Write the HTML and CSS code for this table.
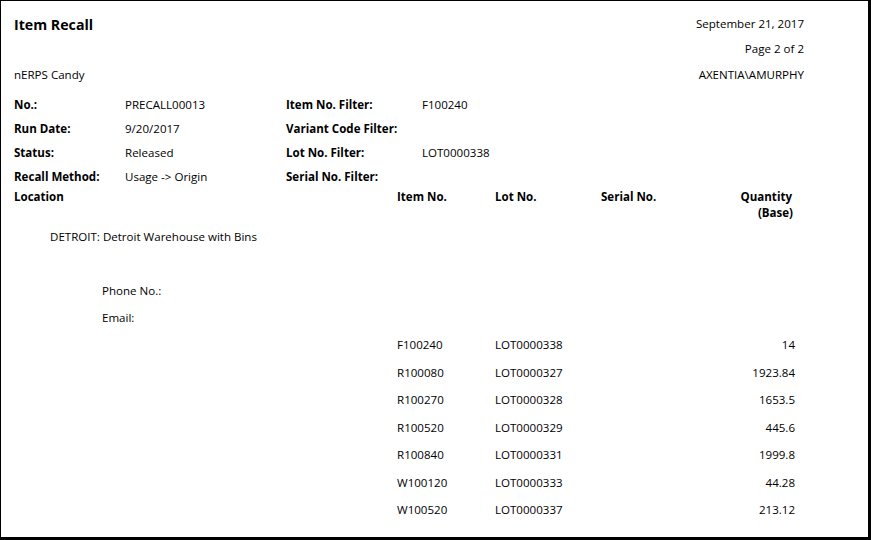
FILE: index.html
```html
<!DOCTYPE html>
<html>
<head>
<meta charset="utf-8">
<link rel="stylesheet" href="styles.css">
</head>
<body>
<div class="page">
  <div class="top">
    <div class="title">Item Recall</div>
    <div class="right">September 21, 2017</div>
    <div></div>
    <div class="right">Page 2 of 2</div>
    <div>nERPS Candy</div>
    <div class="right">AXENTIA\AMURPHY</div>
  </div>

  <div class="info">
    <div class="lbl">No.:</div><div>PRECALL00013</div><div class="lbl">Item No. Filter:</div><div>F100240</div>
    <div class="lbl">Run Date:</div><div>9/20/2017</div><div class="lbl">Variant Code Filter:</div><div></div>
    <div class="lbl">Status:</div><div>Released</div><div class="lbl">Lot No. Filter:</div><div>LOT0000338</div>
    <div class="lbl">Recall Method:</div><div>Usage -&gt; Origin</div><div class="lbl">Serial No. Filter:</div><div></div>
  </div>

  <div class="head">
    <div class="lbl">Location</div>
    <div class="lbl">Item No.</div>
    <div class="lbl">Lot No.</div>
    <div class="lbl">Serial No.</div>
    <div class="lbl qty"><span class="q1">Quantity</span><br>(Base)</div>
  </div>

  <div class="loc">DETROIT: Detroit Warehouse with Bins</div>
  <div class="contact phone">Phone No.:</div>
  <div class="contact email">Email:</div>

  <div class="rows">
    <div class="row"><div></div><div>F100240</div><div>LOT0000338</div><div></div><div class="num">14</div></div>
    <div class="row"><div></div><div>R100080</div><div>LOT0000327</div><div></div><div class="num">1923.84</div></div>
    <div class="row"><div></div><div>R100270</div><div>LOT0000328</div><div></div><div class="num">1653.5</div></div>
    <div class="row"><div></div><div>R100520</div><div>LOT0000329</div><div></div><div class="num">445.6</div></div>
    <div class="row"><div></div><div>R100840</div><div>LOT0000331</div><div></div><div class="num">1999.8</div></div>
    <div class="row"><div></div><div>W100120</div><div>LOT0000333</div><div></div><div class="num">44.28</div></div>
    <div class="row"><div></div><div>W100520</div><div>LOT0000337</div><div></div><div class="num">213.12</div></div>
  </div>
</div>
</body>
</html>
```

FILE: styles.css
```css
html, body {
  margin: 0;
  padding: 0;
  background: #fff;
}
body {
  font-family: "Segoe UI", "Open Sans", sans-serif;
  font-size: 11.55px;
  color: #000;
}
.page {
  width: 871px;
  height: 540px;
  box-sizing: border-box;
  border-style: solid;
  border-color: #000;
  border-width: 1px 3px 3px 1px;
  padding: 11px 0 0 13px;
  overflow: hidden;
}
.top {
  display: grid;
  grid-template-columns: 1fr auto;
  grid-template-rows: 24px 25px 26px;
  line-height: 24px;
  padding-right: 64px;
}
.top > div {
  align-self: end;
}
.top > .title,
.top > div:nth-child(2) {
  align-self: start;
}
.title {
  font-size: 14.2px;
  font-weight: 700;
  padding-top: 2px;
  line-height: 22px;
}
.right {
  text-align: right;
}
.lbl {
  font-weight: 700;
}
.info {
  margin-top: 6px;
  display: grid;
  grid-template-columns: 111px 161px 136px 1fr;
  grid-auto-rows: 24px;
  line-height: 24px;
}
.head {
  display: grid;
  grid-template-columns: 383px 98px 106px 1fr auto;
  line-height: 16px;
  padding-right: 75px;
}
.qty {
  text-align: right;
}
.q1 {
  padding-right: 1px;
}
.loc {
  margin-top: 8px;
  line-height: 16px;
  padding-left: 36px;
}
.contact {
  line-height: 16px;
  padding-left: 88px;
}
.phone {
  margin-top: 38px;
}
.email {
  margin-top: 11px;
}
.rows {
  margin-top: 5px;
}
.row {
  display: grid;
  grid-template-columns: 383px 98px 106px 1fr auto;
  height: 27.5px;
  line-height: 27.5px;
  padding-right: 73px;
}
.num {
  text-align: right;
}
```
